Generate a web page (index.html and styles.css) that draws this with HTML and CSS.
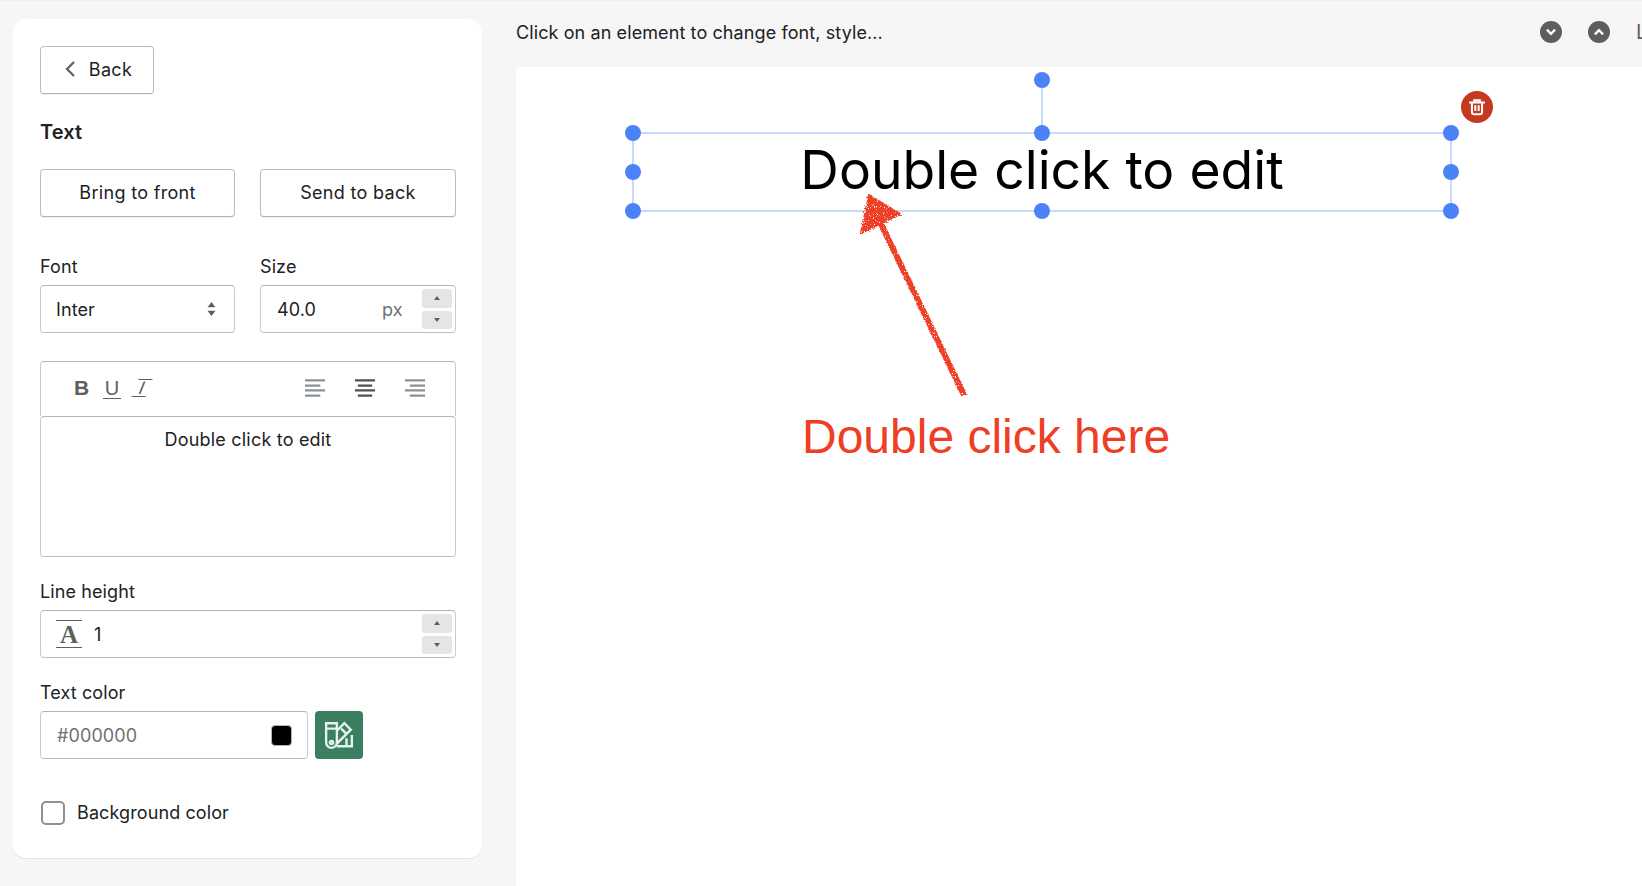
FILE: index.html
```html
<!DOCTYPE html>
<html lang="en">
<head>
<meta charset="utf-8">
<title>Text editor</title>
<link rel="stylesheet" href="styles.css">
</head>
<body>
<div class="app">
  <aside class="panel">
    <button class="btn back"><svg class="back-icon" viewBox="0 0 12 18"><path d="M10 2 3 9l7 7"/></svg><span>Back</span></button>
    <h2 class="heading">Text</h2>
    <div class="two-col order">
      <button class="btn">Bring to front</button>
      <button class="btn">Send to back</button>
    </div>
    <div class="two-col font-row">
      <div class="field">
        <label class="label">Font</label>
        <div class="box select"><span>Inter</span>
          <svg class="updown" viewBox="0 0 10 16"><path d="M5 0 9.500 6H.5zM5 16 .5 10h9z"/></svg>
        </div>
      </div>
      <div class="field">
        <label class="label">Size</label>
        <div class="box number"><span class="num-value size-value">40.0</span><span class="unit">px</span>
          <div class="spin"><span class="spin-btn"><i class="tri up"></i></span><span class="spin-btn"><i class="tri down"></i></span></div>
        </div>
      </div>
    </div>
    <div class="editor">
      <div class="toolbar">
        <div class="fmt">
          <span class="fmt-b">B</span>
          <span class="fmt-u">U</span>
          <span class="fmt-i">I</span>
        </div>
        <div class="aligns">
          <svg class="align" viewBox="0 0 22 20"><path d="M0 2h21M0 7.500h16M0 12.500h21M0 18h16"/></svg>
          <svg class="align active" viewBox="0 0 22 20"><path d="M0 2h21M3 7.500h15M0 12.500h21M3 18h15"/></svg>
          <svg class="align" viewBox="0 0 22 20"><path d="M0 2h21M5 7.500h16M0 12.500h21M5 18h16"/></svg>
        </div>
      </div>
      <div class="editor-area">Double click to edit</div>
    </div>
    <div class="field line-row">
      <label class="label">Line height</label>
      <div class="box number"><span class="lh-icon">A</span><span class="num-value">1</span>
        <div class="spin"><span class="spin-btn"><i class="tri up"></i></span><span class="spin-btn"><i class="tri down"></i></span></div>
      </div>
    </div>
    <div class="field color-row">
      <label class="label">Text color</label>
      <div class="color-line">
        <div class="box color-input"><span class="placeholder">#000000</span><span class="swatch"></span></div>
        <button class="palette">
          <svg viewBox="0 0 28 28"><path d="M2 3h10v18a5 5 0 0 1-10 0zM2 8h10M12 10l7-7 6 6-13 13M16 8l5 5M12 24.500h14V14M21 24V17"/><circle cx="7" cy="21" r="1.500"/></svg>
        </button>
      </div>
    </div>
    <label class="check-row"><span class="check"></span><span>Background color</span></label>
  </aside>
  <main class="main">
    <header class="topbar">
      <span class="hint">Click on an element to change font, style...</span>
      <div class="top-icons">
        <span class="circle"><svg viewBox="0 0 12 12"><path d="M2.500 4 6 7.500 9.500 4"/></svg></span>
        <span class="circle"><svg viewBox="0 0 12 12"><path d="M2.500 8 6 4.500 9.500 8"/></svg></span>
        <span class="cut">L</span>
      </div>
    </header>
    <section class="canvas">
      <div class="selection">
        <span class="stem"></span>
        <span class="handle h-rot"></span>
        <span class="handle h-tl"></span><span class="handle h-tc"></span><span class="handle h-tr"></span>
        <span class="handle h-ml"></span><span class="handle h-mr"></span>
        <span class="handle h-bl"></span><span class="handle h-bc"></span><span class="handle h-br"></span>
        <span class="sel-text">Double click to edit</span>
        <span class="trash"><svg viewBox="0 0 16 16"><path d="M1 4h14M5.500 4V2h5v2M3.500 4v8.500a2 2 0 0 0 2 2h5a2 2 0 0 0 2-2V4M6.500 6.500v5M9.500 6.500v5"/></svg></span>
      </div>
      <svg class="arrow" viewBox="0 0 120 220">
        <defs>
          <filter id="rough" x="-20%" y="-20%" width="140%" height="140%" color-interpolation-filters="sRGB">
            <feTurbulence type="fractalNoise" baseFrequency="0.9" numOctaves="2" seed="4" result="noise"/>
            <feDisplacementMap in="SourceGraphic" in2="noise" scale="5" result="moved"/>
            <feColorMatrix in="noise" type="matrix" values="0 0 0 0 0  0 0 0 0 0  0 0 0 0 0  0 0 0 -9 6.800" result="holes"/>
            <feComposite in="moved" in2="holes" operator="in"/>
          </filter>
        </defs>
        <g filter="url(#rough)">
          <path class="arrow-head" d="M18 5 49 24 10 43z"/>
          <path class="arrow-shaft" d="M28 30 113 205"/>
        </g>
      </svg>
      <span class="note">Double click here</span>
    </section>
  </main>
</div>
</body>
</html>
```
FILE: styles.css
```css
* { box-sizing: border-box; }
html, body { margin: 0; height: 100%; overflow: hidden; }
body {
  background: #f6f6f7;
  color: #202223;
  font-family: Inter, "Liberation Sans", sans-serif;
  font-size: 18px;
  letter-spacing: .1px;
  border-top: 1px solid #eeeeef;
}
.app { display: flex; height: 885px; }

.panel {
  width: 469px;
  height: 839px;
  margin: 18px 0 0 13px;
  padding: 27px 26px 0 27px;
  background: #fff;
  border-radius: 13px;
  box-shadow: 0 1px 1px rgba(0,0,0,.08);
  display: flex;
  flex-direction: column;
  flex: none;
}
.btn {
  height: 48px;
  background: #fff;
  border: 1px solid #babfc3;
  border-bottom-color: #aeb4b9;
  border-radius: 4px;
  box-shadow: 0 1px 0 rgba(0,0,0,.05);
  font: inherit;
  letter-spacing: .32px;
  color: #202223;
  padding: 0 0 2px;
}
.back { width: 114px; padding-left: 2px; display: flex; align-items: center; justify-content: center; gap: 13px; }
.back-icon { width: 12px; height: 18px; fill: none; stroke: #5c5f62; stroke-width: 2.200; }
.heading { margin: 26px 0 25px; font-size: 20px; line-height: 24px; font-weight: 600; }
.two-col { display: grid; grid-template-columns: 195px 196px; column-gap: 25px; }
.font-row { margin-top: 38px; }
.field { display: flex; flex-direction: column; gap: 6px; }
.label { line-height: 24px; display: block; }
.box {
  height: 48px;
  background: #fff;
  border: 1px solid #c9cccf;
  border-top-color: #aeb4b9;
  border-bottom-color: #babfc3;
  border-radius: 4px;
  display: flex;
  align-items: center;
}
.select { justify-content: space-between; padding: 0 18px 0 15px; }
.updown { width: 9px; height: 14px; fill: #5c5f62; }
.number { position: relative; padding-left: 16px; }
.size-value { width: 105px; }
.unit { color: #6d7175; }
.spin {
  position: absolute;
  right: 3px;
  top: 3px;
  bottom: 3px;
  width: 30px;
  display: flex;
  flex-direction: column;
  gap: 3px;
}
.spin-btn { flex: 1; background: #e4e5e7; border-radius: 3px; display: flex; align-items: center; justify-content: center; }
.tri { width: 0; height: 0; border-left: 3.500px solid transparent; border-right: 3.500px solid transparent; }
.tri.up { border-bottom: 4px solid #5c5f62; }
.tri.down { border-top: 4px solid #5c5f62; }

.editor { margin-top: 28px; }
.toolbar {
  height: 55px;
  border: 1px solid #c9cccf;
  border-top-color: #aeb4b9;
  border-bottom: 0;
  border-radius: 4px 4px 0 0;
  display: flex;
  align-items: center;
  justify-content: space-between;
  padding: 0 29px 2px 33px;
}
.fmt { display: flex; align-items: center; gap: 13px; color: #5c5f62; letter-spacing: 0; }
.fmt-b { font-family: "Liberation Sans", sans-serif; font-weight: 700; font-size: 21px; line-height: 24px; width: 16px; }
.fmt-u { font-family: "Liberation Sans", sans-serif; font-size: 20px; line-height: 20px; width: 18px; text-align: center; border-bottom: 1px solid #5c5f62; }
.fmt-i { font-family: "Liberation Sans", sans-serif; font-size: 18px; line-height: 16px; width: 14px; margin-left: 1px; text-align: center; border-top: 1px solid #5c5f62; border-bottom: 1px solid #5c5f62; transform: skewX(-22deg); }
.aligns { display: flex; gap: 29px; }
.align { width: 21px; height: 20px; fill: none; stroke: #8c9196; stroke-width: 2.200; }
.align.active { stroke: #4d5054; }
.editor-area {
  height: 141px;
  border: 1px solid #c9cccf;
  border-top-color: #aeb4b9;
  border-bottom-color: #babfc3;
  border-radius: 4px;
  text-align: center;
  padding-top: 11.500px;
  line-height: 22px;
  letter-spacing: .2px;
}
.line-row { margin-top: 23px; }
.lh-icon {
  width: 26px;
  height: 28px;
  margin-right: 12px;
  margin-left: -1px;
  border-top: 1px solid #5c5f62;
  border-bottom: 1px solid #5c5f62;
  color: #5c5f62;
  font-family: "Liberation Serif", serif;
  font-weight: 700;
  font-size: 25px;
  line-height: 27px;
  text-align: center;
}
.color-row { margin-top: 23px; }
.color-line { display: flex; gap: 7px; }
.color-input { width: 268px; justify-content: space-between; padding: 0 15px 0 16px; }
.placeholder { color: #6d7175; }
.swatch { width: 21px; height: 21px; background: #000; border-radius: 4px; border: 1px solid #aeb4b9; }
.palette { width: 48px; height: 48px; border: 0; padding: 0; border-radius: 4px; background: #3a7f62; display: flex; align-items: center; justify-content: center; }
.palette svg { width: 30px; height: 30px; fill: none; stroke: #e6f2ec; stroke-width: 2.200; }
.check-row { margin: 42px 0 0 1px; display: flex; align-items: center; gap: 12px; line-height: 24px; }
.check { width: 24px; height: 24px; border: 2px solid #8c9196; border-radius: 5px; background: #fff; }

.main { margin-left: 34px; flex: 1; min-width: 0; display: flex; flex-direction: column; }
.topbar { height: 66px; display: flex; align-items: center; justify-content: space-between; flex: none; padding-bottom: 4px; }
.top-icons { display: flex; align-items: center; gap: 26px; margin-right: -2px; }
.circle { width: 22px; height: 22px; border-radius: 50%; background: #5c5f62; display: flex; align-items: center; justify-content: center; }
.circle svg { width: 14px; height: 14px; fill: none; stroke: #fff; stroke-width: 2; }
.cut { width: 8px; overflow: hidden; color: #5c5f62; font-size: 20px; }
.canvas { flex: 1; background: #fff; position: relative; overflow: hidden; }
.selection {
  position: absolute;
  left: 116px;
  top: 65px;
  width: 820px;
  height: 80px;
  border: 2px solid #c8d8fb;
  display: flex;
  align-items: center;
  justify-content: center;
}
.sel-text { color: #000; font-size: 53.400px; line-height: 70px; white-space: nowrap; letter-spacing: 0; margin-bottom: 4px; }
.stem { position: absolute; left: 50%; margin-left: -1px; top: -54px; width: 2px; height: 54px; background: #c8d8fb; }
.handle { position: absolute; width: 16px; height: 16px; border-radius: 50%; background: #4c82f7; }
.h-rot { left: 50%; margin-left: -8px; top: -62px; }
.h-tl { left: -9px; top: -9px; }
.h-tc { left: 50%; margin-left: -8px; top: -9px; }
.h-tr { right: -9px; top: -9px; }
.h-ml { left: -9px; top: 30px; }
.h-mr { right: -9px; top: 30px; }
.h-bl { left: -9px; bottom: -9px; }
.h-bc { left: 50%; margin-left: -8px; bottom: -9px; }
.h-br { right: -9px; bottom: -9px; }
.trash {
  position: absolute;
  right: -43px;
  top: -43px;
  width: 32px;
  height: 32px;
  border-radius: 50%;
  background: #c43a1f;
  display: flex;
  align-items: center;
  justify-content: center;
}
.trash svg { width: 18px; height: 18px; fill: none; stroke: #fff; stroke-width: 1.800; }
.arrow { position: absolute; left: 335px; top: 123px; width: 120px; height: 220px; overflow: visible; }
.arrow-head { fill: #ee4027; stroke: #ee4027; stroke-width: 2; stroke-linejoin: round; }
.arrow-shaft { fill: none; stroke: #ee4027; stroke-width: 6; }
.note {
  position: absolute;
  left: 286px;
  top: 340px;
  color: #ee3f26;
  font-family: "Liberation Sans", sans-serif;
  font-size: 48px;
  line-height: 60px;
  letter-spacing: 0;
  white-space: nowrap;
}
```
